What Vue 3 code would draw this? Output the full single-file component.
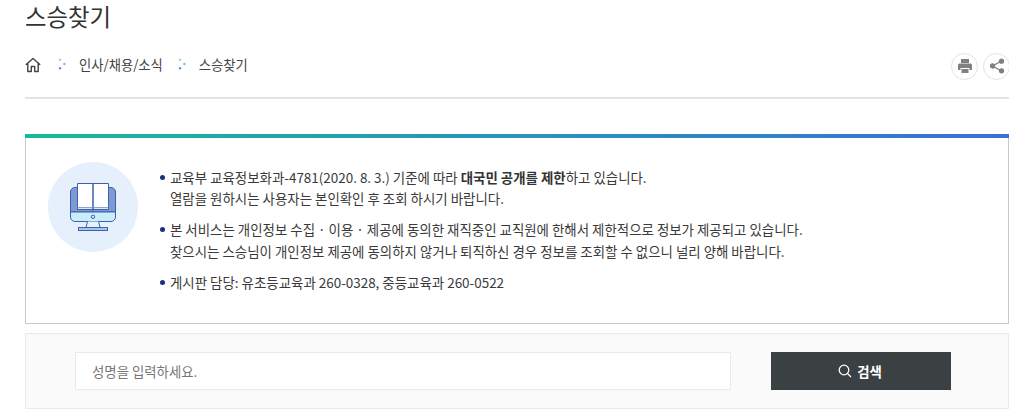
<script setup>
const crumbs = ['인사/채용/소식', '스승찾기']
</script>

<template>
  <div class="page">
    <h1 class="title">스승찾기</h1>
    <div class="crumbbar">
      <nav class="crumbs">
        <svg class="home" width="16" height="16" viewBox="0 0 16 16" fill="none" stroke="#444" stroke-width="1.4" stroke-linejoin="round">
          <path d="M.8 7.800 8 1.400l7.200 6.400M2.800 6.400v8.100h3.500V9.500h3.400v5h3.500V6.400" />
        </svg>
        <template v-for="c in crumbs" :key="c">
          <svg class="sep" width="8" height="12" viewBox="0 0 8 12">
            <circle cx="2" cy="1.800" r="1.200" fill="#9fd3e2" />
            <circle cx="6.400" cy="6" r="1.200" fill="#8fb4e8" />
            <circle cx="2" cy="10.200" r="1.200" fill="#5f92e0" />
          </svg>
          <span class="crumb">{{ c }}</span>
        </template>
      </nav>
      <div class="tools">
        <span class="tool">
          <svg width="16" height="16" viewBox="0 0 16 16" fill="#808080">
            <path d="M4 1h8v4H4zM2.500 5.500h11A1.500 1.500 0 0 1 15 7v5h-2.500v-2h-9v2H1V7a1.500 1.500 0 0 1 1.500-1.500zM4.500 11h7v4h-7z" />
          </svg>
        </span>
        <span class="tool">
          <svg width="16" height="16" viewBox="0 0 16 16" fill="#808080" stroke="#808080" stroke-width="1.300">
            <path d="M12.500 3 3.500 8l9 5" fill="none" />
            <circle cx="12.500" cy="3.200" r="2" />
            <circle cx="3.500" cy="8" r="2" />
            <circle cx="12.500" cy="12.800" r="2" />
          </svg>
        </span>
      </div>
    </div>

    <section class="notice">
      <div class="badge">
        <svg width="62" height="62" viewBox="0 0 62 62" fill="none">
          <path d="M13 11.500h36a4.500 4.500 0 0 1 4.500 4.500v20h-45V16a4.500 4.500 0 0 1 4.500-4.500z" fill="#7e9bd1" stroke="#3f5fb0" />
          <path d="M8.500 36h45v5a4.500 4.500 0 0 1-4.500 4.500H13A4.500 4.500 0 0 1 8.500 41z" fill="#c8eefa" stroke="#3f5fb0" />
          <circle cx="31" cy="40.800" r="1.700" stroke="#3f5fb0" />
          <path d="M25.500 45.500 24 51.500h14l-1.500-6" fill="#e4f4fb" stroke="#3f5fb0" />
          <rect x="16.500" y="51.500" width="29" height="3" fill="#a9c4ea" stroke="#3f5fb0" />
          <path d="M15.500 7.500H31v24H15.500zM31 7.500h15.500v24H31z" fill="#fff" stroke="#3f5fb0" />
          <path d="M15.500 31.500v2H31v-2M46.500 31.500v2H31v-2M31 33.500v2.500" fill="#dfe9f7" stroke="#3f5fb0" />
        </svg>
      </div>
      <ul class="list">
        <li>교육부 교육정보화과-4781(2020. 8. 3.) 기준에 따라 <b>대국민 공개를 제한</b>하고 있습니다.<br />열람을 원하시는 사용자는 본인확인 후 조회 하시기 바랍니다.</li>
        <li>본 서비스는 개인정보 수집 · 이용 · 제공에 동의한 재직중인 교직원에 한해서 제한적으로 정보가 제공되고 있습니다.<br />찾으시는 스승님이 개인정보 제공에 동의하지 않거나 퇴직하신 경우 정보를 조회할 수 없으니 널리 양해 바랍니다.</li>
        <li>게시판 담당: 유초등교육과 260-0328, 중등교육과 260-0522</li>
      </ul>
    </section>

    <form class="search" @submit.prevent>
      <input class="field" type="text" placeholder="성명을 입력하세요." />
      <button class="btn" type="submit">
        <svg width="14" height="14" viewBox="0 0 14 14" fill="none" stroke="#fff" stroke-width="1.300">
          <circle cx="6" cy="6" r="4.800" />
          <path d="m9.500 9.500 3.500 3.500" />
        </svg>
        검색
      </button>
    </form>
  </div>
</template>

<style>
html, body { margin: 0; background: #fff; }
</style>

<style scoped>
.page {
  width: 984px;
  height: 420px;
  margin-left: 25px;
  overflow: hidden;
  font-family: "Noto Sans CJK KR", "Noto Sans", sans-serif;
  color: #333;
}
.title {
  margin: 0;
  font-size: 23.400px;
  font-weight: 400;
  line-height: 34px;
  height: 33px;
  color: #333;
  position: relative;
  top: -1px;
}
.crumbbar {
  height: 66px;
  box-sizing: border-box;
  display: flex;
  align-items: center;
  justify-content: space-between;
  border-bottom: 2px solid #e4e4e4;
}
.crumbs {
  display: flex;
  align-items: center;
  margin-top: -2px;
  font-size: 13.300px;
  color: #444;
}
.home { margin-right: 17px; position: relative; top: 1px; }
.sep { margin-right: 13px; }
.crumb { margin-right: 15px; }
.tools { display: flex; gap: 5px; margin-top: 2px; margin-right: -1px; }
.tool {
  width: 27px;
  height: 27px;
  box-sizing: border-box;
  border: 1px solid #e2e2e2;
  border-radius: 50%;
  display: flex;
  align-items: center;
  justify-content: center;
}
.notice {
  margin-top: 35px;
  height: 190px;
  box-sizing: border-box;
  border: 1px solid #c8c8c8;
  border-top: 0;
  position: relative;
  display: flex;
  padding: 28px 0 0 22px;
}
.notice::before {
  content: "";
  position: absolute;
  left: -1px;
  right: -1px;
  top: 0;
  height: 4px;
  background: linear-gradient(90deg, #17b99a, #3a6fd8);
}
.badge {
  width: 90px;
  height: 90px;
  border-radius: 50%;
  background: #e6f0fd;
  display: flex;
  align-items: center;
  justify-content: center;
  flex: none;
}
.list {
  list-style: none;
  margin: 4.500px 0 0 22px;
  padding: 0;
  font-size: 13.450px;
  line-height: 21.500px;
  color: #3a3a3a;
}
.list li {
  position: relative;
  padding-left: 10px;
  margin-bottom: 9.500px;
  white-space: nowrap;
}
.list li::before {
  content: "";
  position: absolute;
  left: 0;
  top: 8px;
  width: 5px;
  height: 5px;
  border-radius: 50%;
  background: #1d2f7f;
}
.list b { font-weight: 700; color: #333; }
.search {
  margin-top: 9px;
  height: 76px;
  box-sizing: border-box;
  border: 1px solid #eaeaea;
  background: #fafafa;
  display: flex;
  align-items: center;
  padding-left: 49px;
  gap: 40px;
}
.field {
  width: 656px;
  height: 38px;
  box-sizing: border-box;
  border: 1px solid #eaeaea;
  background: #fff;
  padding: 0 16px;
  font: 13.400px "Noto Sans CJK KR", sans-serif;
  outline: none;
}
.field::placeholder { color: #777; opacity: 1; }
.btn {
  width: 180px;
  height: 38px;
  border: 0;
  background: #3b4043;
  color: #fff;
  font: 700 13.400px "Noto Sans CJK KR", sans-serif;
  display: flex;
  align-items: center;
  justify-content: center;
  gap: 5px;
  padding: 0 2px 0 0;
}
</style>
